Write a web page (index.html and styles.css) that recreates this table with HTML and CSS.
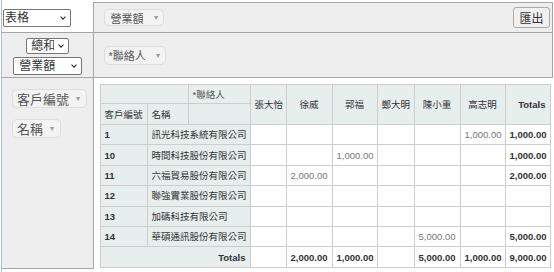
FILE: index.html
```html
<!DOCTYPE html>
<html>
<head>
  <meta charset="UTF-8">
  <title>客戶營業額樞紐分析</title>
  <link rel="stylesheet" href="styles.css">
</head>
<body>
  <div class="page">
    <table class="pvtUi">
      <colgroup>
        <col class="side-col">
        <col>
      </colgroup>
      <tr class="ui-top">
        <td class="pvtRenderer">
          <span class="select-wrap">
            <select class="renderer-select">
              <option>表格</option>
              <option>熱圖</option>
            </select>
          </span>
        </td>
        <td class="pvtAxisContainer">
          <div class="axis-bar">
            <span class="pvtAttr">營業額<span class="pvtTriangle">&#9662;</span></span>
            <button class="export-btn">匯出</button>
          </div>
        </td>
      </tr>
      <tr class="ui-mid">
        <td class="pvtVals">
          <span class="select-wrap">
            <select class="agg-select">
              <option>總和</option>
              <option>計數</option>
            </select>
          </span>
          <span class="select-wrap">
            <select class="attr-select">
              <option>營業額</option>
            </select>
          </span>
        </td>
        <td class="pvtAxisContainer">
          <span class="pvtAttr mid">*聯絡人<span class="pvtTriangle">&#9662;</span></span>
        </td>
      </tr>
      <tr class="ui-main">
        <td class="pvtAxisContainer pvtRows">
          <ul class="attr-list">
            <li><span class="pvtAttr big">客戶編號<span class="pvtTriangle">&#9662;</span></span></li>
            <li><span class="pvtAttr big">名稱<span class="pvtTriangle">&#9662;</span></span></li>
          </ul>
        </td>
        <td class="pvtRendererArea">
          <table class="pvtTable">
            <colgroup>
              <col style="width: 47px">
              <col style="width: 41px">
              <col style="width: 62px">
              <col style="width: 36px">
              <col style="width: 46px">
              <col style="width: 45px">
              <col style="width: 37px">
              <col style="width: 46px">
              <col style="width: 45px">
              <col style="width: 45px">
            </colgroup>
            <thead>
              <tr class="head-a">
                <th colspan="2"></th>
                <th class="pvtAxisLabel top">*聯絡人</th>
                <th class="pvtColLabel" rowspan="2">張大怡</th>
                <th class="pvtColLabel" rowspan="2">徐威</th>
                <th class="pvtColLabel" rowspan="2">郭福</th>
                <th class="pvtColLabel" rowspan="2">鄭大明</th>
                <th class="pvtColLabel" rowspan="2">陳小重</th>
                <th class="pvtColLabel" rowspan="2">高志明</th>
                <th class="pvtTotalLabel" rowspan="2">Totals</th>
              </tr>
              <tr class="head-b">
                <th class="pvtAxisLabel">客戶編號</th>
                <th class="pvtAxisLabel">名稱</th>
                <th></th>
              </tr>
            </thead>
            <tbody>
              <tr>
                <th class="pvtRowLabel num">1</th>
                <th class="pvtRowLabel" colspan="2">訊光科技系統有限公司</th>
                <td></td><td></td><td></td><td></td><td></td>
                <td class="pvtVal">1,000.00</td>
                <td class="pvtTotal">1,000.00</td>
              </tr>
              <tr>
                <th class="pvtRowLabel num">10</th>
                <th class="pvtRowLabel" colspan="2">時間科技股份有限公司</th>
                <td></td><td></td>
                <td class="pvtVal">1,000.00</td>
                <td></td><td></td><td></td>
                <td class="pvtTotal">1,000.00</td>
              </tr>
              <tr>
                <th class="pvtRowLabel num">11</th>
                <th class="pvtRowLabel" colspan="2">六福貿易股份有限公司</th>
                <td></td>
                <td class="pvtVal">2,000.00</td>
                <td></td><td></td><td></td><td></td>
                <td class="pvtTotal">2,000.00</td>
              </tr>
              <tr>
                <th class="pvtRowLabel num">12</th>
                <th class="pvtRowLabel" colspan="2">聯強實業股份有限公司</th>
                <td></td><td></td><td></td><td></td><td></td><td></td>
                <td class="pvtTotal"></td>
              </tr>
              <tr>
                <th class="pvtRowLabel num">13</th>
                <th class="pvtRowLabel" colspan="2">加碼科技有限公司</th>
                <td></td><td></td><td></td><td></td><td></td><td></td>
                <td class="pvtTotal"></td>
              </tr>
              <tr>
                <th class="pvtRowLabel num">14</th>
                <th class="pvtRowLabel" colspan="2">華碩通訊股份有限公司</th>
                <td></td><td></td><td></td><td></td>
                <td class="pvtVal">5,000.00</td>
                <td></td>
                <td class="pvtTotal">5,000.00</td>
              </tr>
              <tr>
                <th class="pvtTotalLabel" colspan="3">Totals</th>
                <td class="pvtTotal"></td>
                <td class="pvtTotal">2,000.00</td>
                <td class="pvtTotal">1,000.00</td>
                <td class="pvtTotal"></td>
                <td class="pvtTotal">5,000.00</td>
                <td class="pvtTotal">1,000.00</td>
                <td class="pvtTotal">9,000.00</td>
              </tr>
            </tbody>
          </table>
        </td>
      </tr>
    </table>
  </div>
</body>
</html>
```

FILE: styles.css
```css
body {
  margin: 0;
  background: #fff;
  color: #333;
  font-family: "Liberation Sans", "Noto Sans CJK TC", sans-serif;
}

.page {
  height: 272px;
  margin-left: 1px;
  padding-top: 2px;
  border-left: 1px solid #a9c0e4;
  box-sizing: border-box;
}

/* outer pivot layout */
.pvtUi {
  width: 551px;
  border-collapse: collapse;
  table-layout: fixed;
}

.pvtUi > tbody > tr > td,
.pvtUi > tr > td {
  padding: 0;
}

.side-col {
  width: 91px;
}

.ui-top {
  height: 30px;
}

.ui-mid {
  height: 45px;
}

.ui-main {
  height: 191px;
}

.pvtRenderer {
  padding-left: 1px !important;
  vertical-align: middle;
  background: #fff;
}

.pvtAxisContainer,
.pvtVals {
  background: #eee;
  border: 1px solid #a6a6a6;
}

.pvtAxisContainer {
  padding-left: 10px !important;
  vertical-align: middle;
}

.pvtVals {
  text-align: center;
  vertical-align: middle;
  border-left: none;
}

.pvtRows {
  vertical-align: top;
  border-left: none;
  padding-left: 10px !important;
}

.axis-bar {
  display: flex;
  justify-content: space-between;
  align-items: center;
  padding-right: 2px;
}

/* selects drawn flat, with a chevron on the right */
.select-wrap {
  position: relative;
  display: inline-block;
  vertical-align: middle;
}

.select-wrap::after {
  content: "";
  position: absolute;
  right: 6px;
  top: 50%;
  width: 3px;
  height: 3px;
  border-right: 1.5px solid #222;
  border-bottom: 1.5px solid #222;
  transform: translateY(-75%) rotate(45deg);
  pointer-events: none;
}

.pvtVals .select-wrap {
  display: block;
  margin: 0 auto;
}

select {
  appearance: none;
  -webkit-appearance: none;
  display: block;
  font-family: "Liberation Sans", "Noto Sans CJK TC", sans-serif;
  font-size: 12px;
  color: #333;
  background: #fff;
  border: 1px solid #767676;
  border-radius: 2px;
  padding: 0 14px 0 1px;
  box-sizing: border-box;
}

.renderer-select {
  width: 68px;
  height: 18px;
}

.pvtVals .select-wrap:first-child {
  width: 43px;
  margin-top: 2px;
  padding-left: 1px;
}

.agg-select {
  width: 43px;
  height: 16px;
  padding-left: 4px;
}

.pvtVals .select-wrap:last-child {
  width: 69px;
  margin-top: 3px;
  padding-left: 1px;
}

.attr-select {
  width: 69px;
  height: 18px;
  padding-left: 5px;
}

.pvtAttr {
  display: inline-flex;
  align-items: center;
  height: 17px;
  padding: 0 5px 0 6px;
  font-size: 11px;
  color: #555;
  background: #f3f3f3;
  border: 1px solid #dedede;
  border-radius: 5px;
  box-sizing: border-box;
  white-space: nowrap;
}

.pvtAttr.mid {
  height: 19px;
  padding-left: 4px;
}

.pvtAttr.big {
  height: 19px;
  padding: 0 6px 0 4px;
  font-size: 13px;
}

.pvtTriangle {
  font-size: 8px;
  color: #999;
  margin-left: 10px;
}

.pvtAttr.big .pvtTriangle {
  margin-left: 7px;
}

.attr-list {
  list-style: none;
  margin: 11px 0 0;
  padding: 0;
  display: flex;
  flex-direction: column;
  align-items: flex-start;
  gap: 11px;
}

.export-btn {
  width: 37px;
  height: 21px;
  padding: 0;
  font-family: "Liberation Sans", "Noto Sans CJK TC", sans-serif;
  font-size: 12px;
  color: #333;
  background: #f0f0f0;
  border: 1px solid #ababab;
  border-radius: 3px;
}

.pvtRendererArea {
  vertical-align: top;
  padding: 6px 0 0 6px !important;
  background: #fff;
}

/* the data table */
.pvtTable {
  width: 450px;
  table-layout: fixed;
  border-collapse: collapse;
  font-size: 9.5px;
  line-height: 11px;
  text-align: left;
}

.pvtTable th,
.pvtTable td {
  padding: 0 4px;
  border: 1px solid #cdcdcd;
  white-space: nowrap;
  overflow: hidden;
}

.pvtTable th {
  background: #e6eeee;
  color: #333;
  font-weight: normal;
}

.head-a {
  height: 19px;
}

.head-b {
  height: 21px;
}

.pvtTable tbody tr {
  height: 20.4px;
}

.pvtAxisLabel.top {
  vertical-align: top;
  padding-top: 4px;
  color: #555;
}

.pvtColLabel {
  text-align: center;
}

.pvtTotalLabel {
  text-align: right;
  font-weight: bold !important;
}

.pvtRowLabel.num {
  font-weight: bold;
}

.pvtTable td {
  text-align: right;
  color: #777;
  background: #fff;
}

.pvtTable td.pvtTotal {
  color: #333;
  font-weight: bold;
}
```
